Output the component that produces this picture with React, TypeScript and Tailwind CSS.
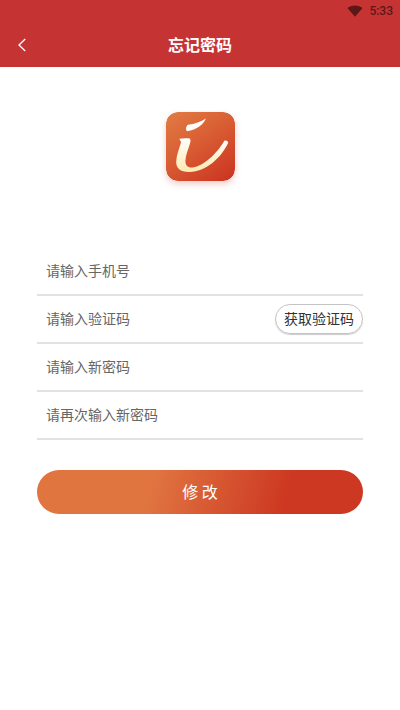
import React from "react";

type FieldProps = {
  id: string;
  label: string;
  type: string;
  children?: React.ReactNode;
};

// The label sits in the same grid cell as the input and hides once a value is typed.
function Field({ id, label, type, children }: FieldProps) {
  return (
    <div className="flex h-12 items-center border-b-2 border-[#e2e2e2]">
      <div className="grid h-full min-w-0 flex-1 items-center">
        <input
          id={id}
          type={type}
          placeholder=" "
          className="peer col-start-1 row-start-1 h-full w-full min-w-0 bg-transparent pb-[2px] pl-[9px] text-sm leading-6 text-[#333333] outline-none"
        />
        <label
          htmlFor={id}
          className="pointer-events-none invisible col-start-1 row-start-1 pb-[2px] pl-[9px] text-sm leading-6 text-[#666666] peer-placeholder-shown:visible"
        >
          {label}
        </label>
      </div>
      {children}
    </div>
  );
}

function Logo() {
  return (
    <svg
      viewBox="0 0 69 69"
      className="h-[69px] w-[69px] rounded-xl shadow-[0_3px_6px_rgba(205,55,34,0.25)]"
      aria-hidden="true"
    >
      <defs>
        <linearGradient id="tile" x1="0.15" y1="0" x2="0.85" y2="1">
          <stop offset="0" stopColor="#e07842" />
          <stop offset="0.4" stopColor="#da6035" />
          <stop offset="1" stopColor="#cc3722" />
        </linearGradient>
        <linearGradient id="stroke" x1="0" y1="0" x2="0" y2="1">
          <stop offset="0" stopColor="#ffffff" />
          <stop offset="0.5" stopColor="#fff4d6" />
          <stop offset="1" stopColor="#fdeab2" />
        </linearGradient>
      </defs>
      <rect width="69" height="69" rx="12" fill="url(#tile)" />
      <path
        d="M39.8 6.4 C37.6 12.4 31 17.4 21 19.2 C19.4 17.8 19.8 14.2 22 12.8 C29 11.8 35 9.8 39.8 6.4 Z"
        fill="#fffdf8"
      />
      <path
        d="M13.4 26.8 C16.6 26 20.8 26 23.8 26.6 C24.8 27.8 24.6 29.6 24 31.6 C22 38 19.6 43.6 19.4 49 C19.4 53.8 22 56 27 55.4 C37.6 54 50.6 42 58.2 29 C59.8 28 61.8 29 62.2 30.8 C54.8 46.8 39.6 59.4 23.6 60 C14.4 60.2 10 56.4 10.2 49.8 C10.4 43.4 13 37 15 30.4 C15 29 13.8 28.4 13.4 26.8 Z"
        fill="url(#stroke)"
      />
    </svg>
  );
}

export default function App() {
  return (
    <div className="min-h-screen bg-white font-['Noto_Sans_CJK_SC',sans-serif]">
      <header className="bg-[#c63333]">
        <div className="flex h-[22px] items-center justify-end gap-[6px] pr-[7px] text-[#5c1718]">
          <svg viewBox="0 0 16 12" className="h-3 w-4" aria-hidden="true">
            <path d="M0.4 3 C4.6 -0.4 11.4 -0.4 15.6 3 L8 11.8 Z" fill="currentColor" />
          </svg>
          <span className="font-[Roboto,sans-serif] text-xs font-medium">5:33</span>
        </div>
        <div className="grid h-[45px] grid-cols-[44px_1fr_44px] items-center text-white">
          <button type="button" aria-label="返回" className="flex h-full items-center justify-center">
            <svg viewBox="0 0 8 14" className="h-[14px] w-2" fill="none" aria-hidden="true">
              <path d="M7.2 1 L1 7 L7.2 13" stroke="currentColor" strokeWidth="1.3" />
            </svg>
          </button>
          <h1 className="pb-[2px] text-center text-base font-bold">忘记密码</h1>
        </div>
      </header>

      <main className="px-[37px] pt-[45px]">
        <div className="flex justify-center">
          <Logo />
        </div>
        <form className="mt-[67px]" onSubmit={(e) => e.preventDefault()}>
          <Field id="phone" label="请输入手机号" type="tel" />
          <Field id="code" label="请输入验证码" type="text">
            <button
              type="button"
              className="h-[30px] shrink-0 rounded-full border border-[#c4c4c4] px-2 pb-[2px] text-sm text-[#333333] shadow-[0_1px_1px_rgba(0,0,0,0.2)]"
            >
              获取验证码
            </button>
          </Field>
          <Field id="password" label="请输入新密码" type="password" />
          <Field id="confirm" label="请再次输入新密码" type="password" />
          <button
            type="submit"
            className="mt-[30px] h-11 w-full rounded-full bg-[linear-gradient(105deg,#e07540_35%,#cd3822_76%)] pb-[2px] text-base text-white"
          >
            修 改
          </button>
        </form>
      </main>
    </div>
  );
}
